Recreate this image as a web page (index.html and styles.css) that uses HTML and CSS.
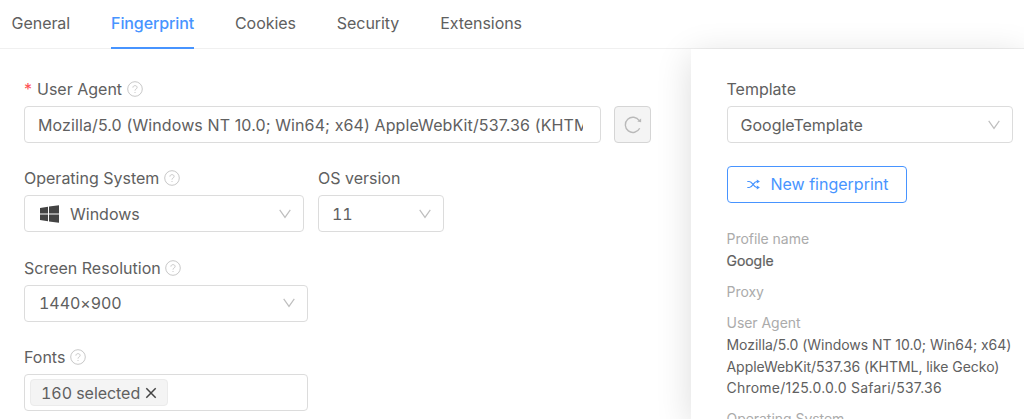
FILE: index.html
```html
<!DOCTYPE html>
<html lang="en">
<head>
<meta charset="utf-8">
<title>Fingerprint</title>
<link rel="stylesheet" href="styles.css">
</head>
<body>
<svg class="defs" width="0" height="0">
  <symbol id="help" viewBox="0 0 16 16"><circle cx="8" cy="8" r="7.3"/><path d="M5.9 6.6C5.9 4 10.1 4 10.1 6.5C10.1 8 8 7.9 8 9.6M8 11v1"/></symbol>
  <symbol id="chevron" viewBox="0 0 12 10"><path d="M.7 .9L6 8.4L11.3 .9"/></symbol>
</svg>
<nav class="tabs">
  <a class="tab">General</a>
  <a class="tab active">Fingerprint</a>
  <a class="tab">Cookies</a>
  <a class="tab">Security</a>
  <a class="tab">Extensions</a>
</nav>
<div class="content">
  <main class="form">
    <section class="field">
      <div class="label"><span class="required">*</span>User Agent<svg class="help"><use href="#help"/></svg></div>
      <div class="row">
        <div class="box agent"><span class="clip">Mozilla/5.0 (Windows NT 10.0; Win64; x64) AppleWebKit/537.36 (KHTML, like Gecko)</span></div>
        <button class="refresh"><svg viewBox="0 0 18 18"><path d="M15.7 12.3A7.6 7.6 0 1 1 15.3 4.7"/><path class="tip" d="M17.1 2.5V6.3L13.3 5.4Z"/></svg></button>
      </div>
    </section>
    <div class="row">
      <section class="field system">
        <div class="label">Operating System<svg class="help"><use href="#help"/></svg></div>
        <div class="box"><svg class="windows" viewBox="0 0 19 18"><path d="M0 2.9L8 1.8V8.5H0ZM9 1.6L19 .2V8.5H9ZM0 9.5H8V16.2L0 15.1ZM9 9.5H19V17.8L9 16.4Z"/></svg>Windows<svg class="chevron"><use href="#chevron"/></svg></div>
      </section>
      <section class="field version">
        <div class="label">OS version</div>
        <div class="box number">11<svg class="chevron"><use href="#chevron"/></svg></div>
      </section>
    </div>
    <section class="field wide">
      <div class="label">Screen Resolution<svg class="help"><use href="#help"/></svg></div>
      <div class="box number">1440×900<svg class="chevron"><use href="#chevron"/></svg></div>
    </section>
    <section class="field wide">
      <div class="label">Fonts<svg class="help"><use href="#help"/></svg></div>
      <div class="box tags"><span class="tag">160 selected<svg viewBox="0 0 12 12"><path d="M1.3 1.3L10.7 10.7M10.7 1.3L1.3 10.7"/></svg></span></div>
    </section>
  </main>
  <aside class="panel">
    <div class="label">Template</div>
    <div class="box">GoogleTemplate<svg class="chevron"><use href="#chevron"/></svg></div>
    <button class="new"><svg viewBox="0 0 13 11"><path d="M.3 2.5H2.3C5.5 2.5 6.5 8.5 9.8 8.5H10.5M.3 8.5H2.3C5.5 8.5 6.5 2.5 9.8 2.5H10.5"/><path class="tip" d="M9.8 .4L12.9 2.5L9.8 4.6ZM9.8 6.4L12.9 8.5L9.8 10.6Z"/></svg>New fingerprint</button>
    <dl class="summary">
      <dt>Profile name</dt><dd class="name">Google</dd>
      <dt>Proxy</dt>
      <dt>User Agent</dt><dd>Mozilla/5.0 (Windows NT 10.0; Win64; x64)<br>AppleWebKit/537.36 (KHTML, like Gecko)<br><span class="browser">Chrome/125.0.0.0 Safari/537.36</span></dd>
      <dt>Operating System</dt>
    </dl>
  </aside>
</div>
</body>
</html>
```
FILE: styles.css
```css
* { box-sizing: border-box; }
body { margin: 0; height: 419px; overflow: hidden; background: #fff; color: #606060; font: 16px/24px Inter, "Liberation Sans", sans-serif; display: flex; flex-direction: column; }
svg { fill: none; stroke: currentColor; flex: none; }
.defs { position: absolute; }
.tabs { display: flex; flex: none; gap: 41px; height: 49px; padding: 0 11.6px; border-bottom: 1px solid #f0f0f0; letter-spacing: -.06px; }
.tab { height: 49px; padding-top: 11px; }
.tab.active { color: #4794ff; font-weight: 500; letter-spacing: -.12px; border-bottom: 2px solid #4794ff; }
.content { display: flex; flex: 1; min-height: 0; }
.form { flex: none; width: 691px; padding: 28px 24px 0; }
.field { height: 89.4px; }
.row { display: flex; gap: 14px; }
.label { display: flex; align-items: center; height: 24px; margin-bottom: 5px; }
.required { color: #ff5053; width: 13px; }
.help { width: 16px; height: 16px; margin-left: 4.5px; color: #c8c8c8; }
.box { display: flex; align-items: center; height: 37px; padding: 0 12px 0 13px; border: 1px solid #dcdcdc; border-radius: 4px; background: #fff; }
.agent { width: 577px; padding-right: 17px; letter-spacing: .11px; }
.clip { overflow: hidden; white-space: nowrap; }
.chevron { width: 12px; height: 10px; margin-left: auto; color: #bfbfbf; stroke-width: 1.2; }
.refresh { display: flex; align-items: center; justify-content: center; width: 37px; height: 37px; margin-left: -1px; padding: 0; border: 1px solid #d5d5d5; border-radius: 4px; background: #f4f4f4; color: #b9b9b9; }
.refresh svg { width: 18px; height: 18px; stroke-width: 1.4; }
.tip { fill: currentColor; stroke: none; }
.system { width: 280px; }
.version { width: 126px; }
.wide { width: 284px; }
.system .box { padding-left: 15px; }
.windows { width: 19px; height: 18px; margin-right: 11px; fill: #444; stroke: none; }
.number { letter-spacing: -.05px; font-variant-numeric: tabular-nums; }
.wide .number { padding-left: 14px; }
.tags { padding-left: 5px; }
.tag { display: flex; align-items: center; gap: 5px; width: 138px; height: 27px; padding-left: 10px; letter-spacing: -.05px; font-variant-numeric: tabular-nums; border: 1px solid #ebebeb; border-radius: 4px; background: #f4f4f4; }
.tag svg { width: 12px; height: 12px; stroke: #444; stroke-width: 1.5; }
.panel { flex: 1; min-width: 0; padding: 28px 11px 0 35.5px; background: #fff; box-shadow: 0 7px 34px rgba(0, 0, 0, .14); }
.new { display: flex; align-items: center; gap: 11px; width: 180px; height: 37px; margin: 23px 0 25px; padding: 0 0 1px 19px; border: 1px solid #4794ff; border-radius: 4px; background: #fff; color: #4794ff; font: inherit; }
.new svg { width: 13px; height: 11px; stroke-width: 1.2; }
.summary { margin: 0; font-size: 14px; line-height: 21.9px; letter-spacing: -.04px; white-space: nowrap; }
.summary dt { color: #ababab; margin-bottom: 9px; }
.summary dt:has(+ dd) { margin-bottom: 0; }
.summary dd { margin: 0 0 9px; }
.name { -webkit-text-stroke: .2px; }
.browser { letter-spacing: .23px; }
```
